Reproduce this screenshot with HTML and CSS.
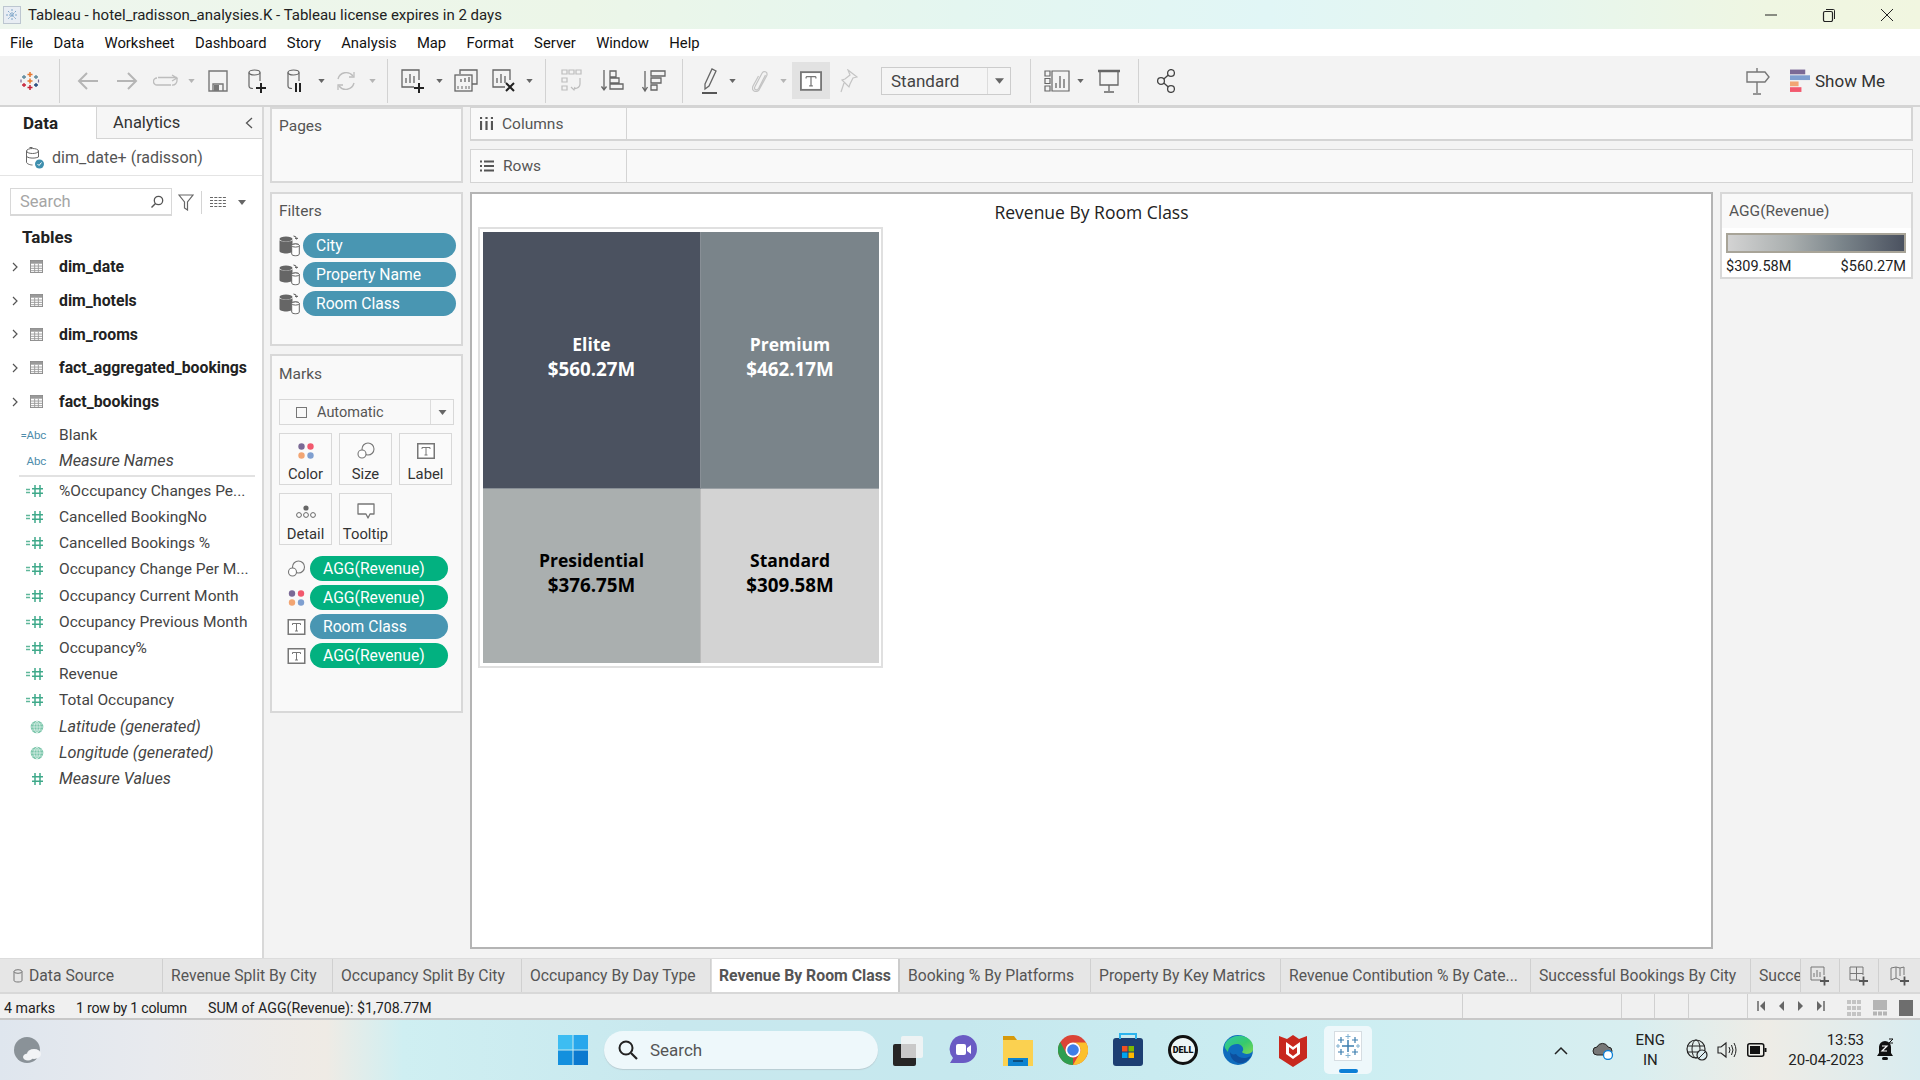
FILE: index.html
```html
<!DOCTYPE html>
<html lang="en">
<head>
<meta charset="utf-8">
<title>Tableau - hotel_radisson_analysies.K</title>
<link rel="stylesheet" href="styles.css">
</head>
<body>
<svg class="defs" xmlns="http://www.w3.org/2000/svg">
  <symbol id="caret" viewBox="0 0 8 5"><path d="M0 0h8L4 5z" fill="currentColor"/></symbol>
  <symbol id="tbl" viewBox="0 0 14 14"><rect x=".5" y=".5" width="13" height="13" fill="#fff" stroke="#8a8a8a"/><rect x="1" y="1" width="12" height="3" fill="#9a9a9a"/><path d="M1 6.500h12M1 9h12M1 11.500h12M5 4v9M9 4v9" stroke="#9a9a9a" fill="none"/></symbol>
  <symbol id="num" viewBox="0 0 20 14"><path d="M1 5.500h4M1 8.500h4" stroke="#5fb79a" fill="none" stroke-width="1.400"/><path d="M10 1v12M15 1v12M7 4.800h11M7 9.300h11" stroke="#3fa98a" fill="none" stroke-width="1.500"/></symbol>
  <symbol id="numplain" viewBox="0 0 20 14"><path d="M10 1v12M15 1v12M7 4.800h11M7 9.300h11" stroke="#3fa98a" fill="none" stroke-width="1.500"/></symbol>
  <symbol id="globe" viewBox="0 0 14 14"><circle cx="7" cy="7" r="6.300" fill="#7cc6ab"/><path d="M1 7h12M2 4h10M2 10h10M7 1v12M7 1c-4 3-4 9 0 12M7 1c4 3 4 9 0 12" stroke="#e4f4ee" stroke-width=".7" fill="none"/></symbol>
  <symbol id="ds" viewBox="0 0 21 22"><ellipse cx="7" cy="4" rx="6.500" ry="2.500" fill="#666"/><path d="M.5 5v11c0 3.300 13 3.300 13 0V5c0 2-13 2-13 0z" fill="#666"/><path d="M14.500 1q3 0 3 3l-1.500-1M17.500 4l1.500-1" stroke="#555" fill="none"/><ellipse cx="16.500" cy="10.500" rx="3.800" ry="1.600" fill="#fff" stroke="#666"/><path d="M12.700 10.500v8.500c0 2.300 7.600 2.300 7.600 0v-8.500" fill="#fff" stroke="#666"/><ellipse cx="16.500" cy="10.500" rx="3.800" ry="1.600" fill="#fff" stroke="#666"/></symbol>
  <symbol id="lab" viewBox="0 0 18 16"><rect x=".75" y=".75" width="16.500" height="14.500" fill="#fff" stroke="#777" stroke-width="1.500"/><path d="M5 4.500h8M9 4.500v7.500M7.500 12h3M5 4.500v1.500M13 4.500v1.500" stroke="#777" fill="none"/></symbol>
  <symbol id="size" viewBox="0 0 18 17"><circle cx="11" cy="7" r="6" fill="none" stroke="#777" stroke-width="1.100"/><circle cx="5" cy="12" r="4" fill="#fff" stroke="#777" stroke-width="1.100"/></symbol>
  <symbol id="color" viewBox="0 0 16 16"><circle cx="3.500" cy="3.500" r="3.200" fill="#7b6a96"/><circle cx="12.500" cy="3.500" r="3.200" fill="#f2596e"/><circle cx="3.500" cy="12.500" r="3.200" fill="#f2a573"/><circle cx="12.500" cy="12.500" r="3.200" fill="#7f9fd0"/></symbol>
  <symbol id="detail" viewBox="0 0 20 14"><circle cx="10" cy="3" r="2.600" fill="#666"/><circle cx="3" cy="10" r="2.400" fill="#fff" stroke="#666"/><circle cx="10" cy="10" r="2.400" fill="#fff" stroke="#666"/><circle cx="17" cy="10" r="2.400" fill="#fff" stroke="#666"/></symbol>
  <symbol id="tip" viewBox="0 0 18 16"><path d="M1 1h16v10h-4l-2 4-2-4H1z" fill="#fff" stroke="#777" stroke-width="1.300" stroke-linejoin="round"/></symbol>
  <symbol id="cyl" viewBox="0 0 14 22"><ellipse cx="6.500" cy="3.500" rx="5.500" ry="2.500" fill="none" stroke="#666" stroke-width="1.200"/><path d="M1 3.500V17c0 1.500 2 2.500 4 2.500M12 3.500V12" fill="none" stroke="#666" stroke-width="1.200"/></symbol>
  <symbol id="sheet" viewBox="0 0 24 24"><path d="M13 18H1V1h17v10" fill="none" stroke="#666" stroke-width="1.300"/><path d="M5 14V9M9 14V5M13 14V7" stroke="#666" stroke-width="1.300"/></symbol>
  <symbol id="chev" viewBox="0 0 6 10"><path d="M1 1l4 4-4 4" fill="none" stroke="#555" stroke-width="1.200"/></symbol>
</svg>

<header class="titlebar">
  <svg class="app-ico" viewBox="0 0 18 18" width="18" height="18"><rect x=".5" y=".5" width="17" height="17" fill="#e8edf3" stroke="#bcc6d0"/><path d="M9 3v12M3 9h12M5 5l8 8M13 5l-8 8" stroke="#7fa6c9" stroke-dasharray="2 1"/></svg>
  <span class="title-text">Tableau - hotel_radisson_analysies.K - Tableau license expires in 2 days</span>
  <div class="winctl">
    <svg width="14" height="14" viewBox="0 0 14 14"><path d="M1 7h12" stroke="#222" fill="none"/></svg>
    <svg width="14" height="14" viewBox="0 0 14 14"><rect x="1.500" y="3.500" width="9" height="10" rx="1.500" fill="none" stroke="#222" stroke-width="1.200"/><path d="M4 1.500h7.500q1 0 1 1V11" fill="none" stroke="#222"/></svg>
    <svg width="14" height="14" viewBox="0 0 14 14"><path d="M1 1l12 12M13 1L1 13" stroke="#222" fill="none"/></svg>
  </div>
</header>

<nav class="menubar">
  <span>File</span><span>Data</span><span>Worksheet</span><span>Dashboard</span><span>Story</span><span>Analysis</span><span>Map</span><span>Format</span><span>Server</span><span>Window</span><span>Help</span>
</nav>

<div class="toolbar">
  <svg width="20" height="20" viewBox="0 0 20 20"><path d="M10 1v5M7.500 3.500h5" stroke="#e8762d" stroke-width="1.500"/><path d="M4 4v4M2 6h4" stroke="#5b879b" stroke-width="1.300"/><path d="M16 4v4M14 6h4" stroke="#5b879b" stroke-width="1.300"/><path d="M10 7.500v5M7.500 10h5" stroke="#e8762d" stroke-width="1.500"/><path d="M4 12v4M2 14h4" stroke="#c72037" stroke-width="1.300"/><path d="M16 12v4M14 14h4" stroke="#1f447a" stroke-width="1.300"/><path d="M10 14v5M7.500 16.500h5" stroke="#c72037" stroke-width="1.500"/><path d="M1 8.500v3M18.500 8.500v3" stroke="#7b6a96" stroke-width="1.200"/></svg>
  <i class="sep"></i>
  <svg width="22" height="20" viewBox="0 0 22 20"><path d="M21 10H2M10 2l-8 8 8 8" fill="none" stroke="#b5b5b5" stroke-width="2"/></svg>
  <svg width="22" height="20" viewBox="0 0 22 20"><path d="M1 10h19M12 2l8 8-8 8" fill="none" stroke="#b5b5b5" stroke-width="2"/></svg>
  <svg width="26" height="14" viewBox="0 0 26 14"><path d="M5 3.500h19M19 1l5 3-5 3M18 11H4a3.500 3.500 0 0 1 0-7" fill="none" stroke="#bdbdbd" stroke-width="1.300"/><path d="M24 4v2a4.500 4.500 0 0 1-5 5" fill="none" stroke="#bdbdbd" stroke-width="1.300"/></svg>
  <svg class="car dim" width="7" height="4"><use href="#caret"/></svg>
  <svg width="20" height="22" viewBox="0 0 20 22"><path d="M1 1h18v20H1z" fill="none" stroke="#777" stroke-width="1.400"/><path d="M5 21v-7h10v7" fill="none" stroke="#777" stroke-width="1.400"/><rect x="6" y="15" width="5" height="6" fill="#777"/></svg>
  <svg width="20" height="24" viewBox="0 0 20 24"><use href="#cyl" width="14" height="22"/><path d="M8 19h10M13 14v10" stroke="#222" stroke-width="2"/></svg>
  <svg width="20" height="24" viewBox="0 0 20 24"><use href="#cyl" width="14" height="22"/><path d="M9 14v9M13 14v9" stroke="#222" stroke-width="2"/></svg>
  <svg class="car" width="7" height="4"><use href="#caret"/></svg>
  <svg width="22" height="22" viewBox="0 0 22 22"><path d="M3 9a8.500 8.500 0 0 1 15-3M19 13a8.500 8.500 0 0 1-15 3" fill="none" stroke="#bdbdbd" stroke-width="1.400"/><path d="M19 2v5h-5M3 20v-5h5" fill="none" stroke="#bdbdbd" stroke-width="1.300"/></svg>
  <svg class="car dim" width="7" height="4"><use href="#caret"/></svg>
  <i class="sep"></i>
  <svg width="24" height="24" viewBox="0 0 24 24"><use href="#sheet"/><path d="M13 19h10M18 14v10" stroke="#222" stroke-width="2"/></svg>
  <svg class="car" width="7" height="4"><use href="#caret"/></svg>
  <svg width="24" height="24" viewBox="0 0 24 24"><path d="M6 5V1h17v14h-5" fill="none" stroke="#666" stroke-width="1.300"/><rect x="1" y="6" width="17" height="16" fill="#f3f3f3" stroke="#666" stroke-width="1.300"/><path d="M11 13V9M15 13V8M7 13V10" stroke="#666" stroke-width="1.300"/><path d="M4 17v3M8 17v3M12 17v3M15 17v3" stroke="#666"/></svg>
  <svg width="24" height="24" viewBox="0 0 24 24"><use href="#sheet"/><path d="M14 14l8 8M22 14l-8 8" stroke="#222" stroke-width="2"/></svg>
  <svg class="car" width="7" height="4"><use href="#caret"/></svg>
  <i class="sep"></i>
  <svg width="22" height="24" viewBox="0 0 22 24"><path d="M1 1h5v4H1zM8 1h5v4H8zM15 1h5v4h-5zM1 9h5v4H1zM1 17h5v4H1z" fill="none" stroke="#bdbdbd" stroke-width="1.200"/><path d="M19 9v6q0 4-6 5M10 18l3 3 1-3" fill="none" stroke="#bdbdbd" stroke-width="1.200"/></svg>
  <svg width="24" height="24" viewBox="0 0 24 24"><path d="M3 1v19M0.500 17.500L3 21l2.500-3.500" fill="none" stroke="#666" stroke-width="1.300"/><path d="M9 2h6v6H9zM9 9h9v5H9zM9 15h13v5H9z" fill="none" stroke="#666" stroke-width="1.300"/></svg>
  <svg width="24" height="24" viewBox="0 0 24 24"><path d="M3 2v19M0.500 18L3 22l2.500-4" fill="none" stroke="#666" stroke-width="1.300"/><path d="M9 2h14v5H9zM9 9h10v5H9zM9 16h6v5H9z" fill="none" stroke="#666" stroke-width="1.300"/></svg>
  <i class="sep"></i>
  <svg width="16" height="26" viewBox="0 0 16 26"><path d="M3 16L10 1l4 2-7 15-4 3z" fill="none" stroke="#666" stroke-width="1.300"/><path d="M0 25h15" stroke="#444" stroke-width="1.800"/></svg>
  <svg class="car" width="7" height="4"><use href="#caret"/></svg>
  <svg width="16" height="22" viewBox="0 0 16 22"><path d="M13.500 5L6.800 18q-1.500 2.500-3.300 1.600T3 16.500L10 3.200q1.300-2.300 3.500-1.400t1.300 3.700L7 20q-2.500 2.500-5 1T1 16L6.500 6" fill="none" stroke="#c4c4c4" stroke-width="1.200"/></svg>
  <svg class="car dim" width="7" height="4"><use href="#caret"/></svg>
  <div class="tbtn-on"><svg width="22" height="22"><use href="#lab" width="22" height="22"/></svg></div>
  <svg width="18" height="24" viewBox="0 0 18 24"><path d="M8 1l9 7-4 1-3 6-1 3-7-7 3-1 5-4zM4 14l-3 9" fill="none" stroke="#c4c4c4" stroke-width="1.200"/></svg>
  <div class="std"><span>Standard</span><b><svg class="car" width="9" height="6"><use href="#caret"/></svg></b></div>
  <i class="sep"></i>
  <svg width="26" height="22" viewBox="0 0 26 22"><path d="M1 1h5v5H1zM1 8.500h5v5H1zM1 16h5v5H1zM8 1h17v20H8z" fill="none" stroke="#666" stroke-width="1.200"/><path d="M12 18v-5M16 18V6M20 18V9" stroke="#666" stroke-width="1.300"/></svg>
  <svg class="car" width="7" height="4"><use href="#caret"/></svg>
  <svg width="22" height="24" viewBox="0 0 22 24"><path d="M0 2h22" stroke="#666" stroke-width="2.500"/><path d="M2 3v13h18V3M11 16v6M6 23h10" fill="none" stroke="#666" stroke-width="1.300"/></svg>
  <i class="sep"></i>
  <svg width="18" height="24" viewBox="0 0 18 24"><circle cx="4" cy="12" r="3.400" fill="none" stroke="#444" stroke-width="1.300"/><circle cx="14" cy="4" r="3.400" fill="none" stroke="#444" stroke-width="1.300"/><circle cx="14" cy="20" r="3.400" fill="none" stroke="#444" stroke-width="1.300"/><path d="M6.800 10l4.500-4M6.800 14l4.500 4" stroke="#444" stroke-width="1.300"/></svg>
  <span class="tb-fill"></span>
  <svg width="24" height="28" viewBox="0 0 24 28"><path d="M1 5h18l4 5-4 5H1zM11 1v4M11 15v11M7 27h8" fill="none" stroke="#777" stroke-width="1.400"/></svg>
  <div class="showme">
    <svg width="20" height="24" viewBox="0 0 21 24"><rect y="0" width="16" height="5" fill="#7b6a96"/><rect y="6" width="21" height="5" fill="#7f9fd0"/><rect y="12.500" width="9" height="5" fill="#f2a573"/><rect y="18.500" width="12" height="5" fill="#f2596e"/></svg>
    <span>Show Me</span>
  </div>
</div>

<main class="main">
  <aside class="datapane">
    <div class="dp-tabs">
      <div class="dp-tab active">Data</div>
      <div class="dp-tab">Analytics<svg class="dp-chev" width="8" height="12" viewBox="0 0 8 12"><path d="M7 1L1.500 6 7 11" fill="none" stroke="#555" stroke-width="1.300"/></svg></div>
    </div>
    <div class="dp-source">
      <svg width="21" height="24" viewBox="0 0 20 24"><ellipse cx="8" cy="5" rx="6" ry="2.500" fill="none" stroke="#666"/><path d="M2 5v11c0 2 4 3 6 3M14 5v6M2 10c0 2 8 3 12 1" fill="none" stroke="#666"/><rect x="5" y="1" width="3" height="1" fill="#666"/><circle cx="15" cy="18" r="4.500" fill="#3f8fae"/><path d="M13 18l1.500 1.500 2.500-3" stroke="#fff" fill="none"/></svg>
      <span>dim_date+ (radisson)</span>
    </div>
    <div class="dp-search">
      <div class="searchbox"><span>Search</span><svg width="14" height="14" viewBox="0 0 14 14"><circle cx="8.500" cy="5.500" r="4.200" fill="none" stroke="#555" stroke-width="1.300"/><path d="M5.500 8.500L1.500 12.500" stroke="#555" stroke-width="1.500"/></svg></div>
      <svg class="dp-funnel" width="16" height="17" viewBox="0 0 16 17"><path d="M1 1h14l-5.500 7v8l-3-2V8z" fill="none" stroke="#666" stroke-width="1.200"/></svg>
      <i class="dp-div"></i>
      <svg class="dp-list" width="16" height="12" viewBox="0 0 16 12"><path d="M0 1.500h16M0 4.500h16M0 7.500h16M0 10.500h16" stroke="#666" stroke-dasharray="3 1.300"/></svg>
      <svg class="car dp-car" width="8" height="5"><use href="#caret"/></svg>
    </div>
    <h2 class="dp-h">Tables</h2>
    <ul class="tables">
      <li><svg class="chev" width="6" height="10"><use href="#chev"/></svg><svg class="ti" width="13" height="13"><use href="#tbl"/></svg><span>dim_date</span></li>
      <li><svg class="chev" width="6" height="10"><use href="#chev"/></svg><svg class="ti" width="13" height="13"><use href="#tbl"/></svg><span>dim_hotels</span></li>
      <li><svg class="chev" width="6" height="10"><use href="#chev"/></svg><svg class="ti" width="13" height="13"><use href="#tbl"/></svg><span>dim_rooms</span></li>
      <li><svg class="chev" width="6" height="10"><use href="#chev"/></svg><svg class="ti" width="13" height="13"><use href="#tbl"/></svg><span>fact_aggregated_bookings</span></li>
      <li><svg class="chev" width="6" height="10"><use href="#chev"/></svg><svg class="ti" width="13" height="13"><use href="#tbl"/></svg><span>fact_bookings</span></li>
    </ul>
    <ul class="fields dims">
      <li><span class="abc">=Abc</span><span>Blank</span></li>
      <li><span class="abc">Abc</span><em>Measure Names</em></li>
    </ul>
    <ul class="fields measures">
      <li><svg class="fi" width="20" height="14"><use href="#num"/></svg><span>%Occupancy Changes Pe...</span></li>
      <li><svg class="fi" width="20" height="14"><use href="#num"/></svg><span>Cancelled BookingNo</span></li>
      <li><svg class="fi" width="20" height="14"><use href="#num"/></svg><span>Cancelled Bookings %</span></li>
      <li><svg class="fi" width="20" height="14"><use href="#num"/></svg><span>Occupancy Change Per M...</span></li>
      <li><svg class="fi" width="20" height="14"><use href="#num"/></svg><span>Occupancy Current Month</span></li>
      <li><svg class="fi" width="20" height="14"><use href="#num"/></svg><span>Occupancy Previous Month</span></li>
      <li><svg class="fi" width="20" height="14"><use href="#num"/></svg><span>Occupancy%</span></li>
      <li><svg class="fi" width="20" height="14"><use href="#num"/></svg><span>Revenue</span></li>
      <li><svg class="fi" width="20" height="14"><use href="#num"/></svg><span>Total Occupancy</span></li>
      <li><svg class="gi" width="14" height="14"><use href="#globe"/></svg><em>Latitude (generated)</em></li>
      <li><svg class="gi" width="14" height="14"><use href="#globe"/></svg><em>Longitude (generated)</em></li>
      <li><svg class="fi" width="20" height="14"><use href="#numplain"/></svg><em>Measure Values</em></li>
    </ul>
  </aside>

  <section class="cards">
    <div class="card pages"><h3>Pages</h3></div>
    <div class="card filters">
      <h3>Filters</h3>
      <div class="pillrow"><svg width="21" height="22"><use href="#ds"/></svg><div class="pill blue">City</div></div>
      <div class="pillrow"><svg width="21" height="22"><use href="#ds"/></svg><div class="pill blue">Property Name</div></div>
      <div class="pillrow"><svg width="21" height="22"><use href="#ds"/></svg><div class="pill blue">Room Class</div></div>
    </div>
    <div class="card marks">
      <h3>Marks</h3>
      <div class="marktype"><i class="mt-box"></i><span>Automatic</span><b><svg class="car" width="9" height="5"><use href="#caret"/></svg></b></div>
      <div class="markbtns">
        <div class="mbtn"><svg width="16" height="16"><use href="#color"/></svg><span>Color</span></div>
        <div class="mbtn"><svg width="18" height="17"><use href="#size"/></svg><span>Size</span></div>
        <div class="mbtn"><svg width="18" height="16"><use href="#lab"/></svg><span>Label</span></div>
        <div class="mbtn"><svg width="20" height="14"><use href="#detail"/></svg><span>Detail</span></div>
        <div class="mbtn"><svg width="18" height="16"><use href="#tip"/></svg><span>Tooltip</span></div>
      </div>
      <div class="markpills">
        <div class="mprow"><svg width="18" height="17"><use href="#size"/></svg><div class="pill green">AGG(Revenue)</div></div>
        <div class="mprow"><svg width="16" height="16"><use href="#color"/></svg><div class="pill green">AGG(Revenue)</div></div>
        <div class="mprow"><svg width="18" height="16"><use href="#lab"/></svg><div class="pill blue">Room Class</div></div>
        <div class="mprow"><svg width="18" height="16"><use href="#lab"/></svg><div class="pill green">AGG(Revenue)</div></div>
      </div>
    </div>
  </section>

  <section class="work">
    <div class="shelf cols">
      <div class="shelf-l"><svg width="13" height="13" viewBox="0 0 13 13"><path d="M1 0v2M6.500 0v2M12 0v2" stroke="#555" stroke-width="2.200"/><path d="M1 4v9M6.500 4v9M12 4v9" stroke="#555" stroke-width="2.200"/></svg><span>Columns</span></div>
    </div>
    <div class="shelf">
      <div class="shelf-l"><svg width="14" height="12" viewBox="0 0 14 12"><path d="M0 1.500h2M4 1.500h10M0 6h2M4 6h10M0 10.500h2M4 10.500h10" stroke="#555" stroke-width="2"/></svg><span>Rows</span></div>
    </div>
    <div class="canvas">
      <div class="view">
        <h1 class="view-title">Revenue By Room Class</h1>
        <div class="treebox">
          <div class="tree">
            <div class="cell elite"><b>Elite</b><b>$560.27M</b></div>
            <div class="cell premium"><b>Premium</b><b>$462.17M</b></div>
            <div class="cell presidential"><b>Presidential</b><b>$376.75M</b></div>
            <div class="cell standard"><b>Standard</b><b>$309.58M</b></div>
          </div>
        </div>
      </div>
      <div class="legend">
        <h3>AGG(Revenue)</h3>
        <div class="legend-body">
          <div class="ramp"></div>
          <div class="ramp-l"><span>$309.58M</span><span>$560.27M</span></div>
        </div>
      </div>
    </div>
  </section>
</main>

<div class="tabs">
  <div class="tab t163"><svg width="10" height="14" viewBox="0 0 10 14"><ellipse cx="5" cy="2.500" rx="4" ry="1.800" fill="none" stroke="#777"/><path d="M1 2.500v9c0 2 8 2 8 0v-9" fill="none" stroke="#777"/></svg>Data Source</div>
  <div class="tab t170">Revenue Split By City</div>
  <div class="tab t189">Occupancy Split By City</div>
  <div class="tab t189">Occupancy By Day Type</div>
  <div class="tab t189 active">Revenue By Room Class</div>
  <div class="tab t191">Booking % By Platforms</div>
  <div class="tab t190">Property By Key Matrics</div>
  <div class="tab t250">Revenue Contibution % By Cate...</div>
  <div class="tab t220">Successful Bookings By City</div>
  <div class="tab t49">Succe</div>
  <div class="tabico"><svg width="20" height="20" viewBox="0 0 20 20"><path d="M11 14H1V1h13v8" fill="none" stroke="#777"/><path d="M4 11V7M7 11V4M10 11V6" stroke="#777"/><path d="M10 15h9M14.500 10.500v9" stroke="#555" stroke-width="1.800"/></svg></div>
  <div class="tabico"><svg width="20" height="20" viewBox="0 0 20 20"><path d="M11 14H1V1h13v8M1 7.500h13M7.500 1v13" fill="none" stroke="#777"/><path d="M10 15h9M14.500 10.500v9" stroke="#555" stroke-width="1.800"/></svg></div>
  <div class="tabico last"><svg width="20" height="20" viewBox="0 0 20 20"><path d="M10 14l-4-2-5 2V2l5-1 4 1 4-1v8M6 1v11M10 2v8" fill="none" stroke="#777"/><path d="M10 15h9M14.500 10.500v9" stroke="#555" stroke-width="1.800"/></svg></div>
</div>

<div class="status">
  <span class="s1">4 marks</span><span class="s2">1 row by 1 column</span><span class="s3">SUM of AGG(Revenue): $1,708.77M</span>
  <div class="st-cells"><i class="c159"></i><i class="c33"></i><i class="c34"></i><i class="c59"></i></div>
  <div class="st-nav">
    <svg width="8" height="10" viewBox="0 0 8 10"><path d="M1 0v10" stroke="#666" stroke-width="1.500"/><path d="M8 0v10L3 5z" fill="#666"/></svg>
    <svg width="5" height="10" viewBox="0 0 5 10"><path d="M5 0v10L0 5z" fill="#666"/></svg>
    <svg width="5" height="10" viewBox="0 0 5 10"><path d="M0 0v10l5-5z" fill="#666"/></svg>
    <svg width="8" height="10" viewBox="0 0 8 10"><path d="M7 0v10" stroke="#666" stroke-width="1.500"/><path d="M0 0v10l5-5z" fill="#666"/></svg>
  </div>
  <div class="st-view">
    <svg width="14" height="16" viewBox="0 0 14 16"><path d="M0 2h14M0 8h14M0 14h14" stroke="#c4c4c4" stroke-width="4" stroke-dasharray="4 1"/></svg>
    <svg width="14" height="16" viewBox="0 0 14 16"><rect width="14" height="10" fill="#b5b5b5"/><path d="M0 13.500h14" stroke="#b5b5b5" stroke-width="4" stroke-dasharray="4 1"/></svg>
    <svg width="14" height="16" viewBox="0 0 14 16"><rect width="14" height="16" fill="#6e6e6e"/></svg>
  </div>
</div>

<footer class="taskbar">
  <svg class="weather" width="28" height="32" viewBox="0 0 28 32"><circle cx="13" cy="16" r="13" fill="#8a9298"/><ellipse cx="20" cy="20" rx="7" ry="5" fill="#f2f4f6"/><ellipse cx="14" cy="23" rx="5" ry="3.500" fill="#f2f4f6"/></svg>
  <div class="tb-center">
    <svg class="winlogo" width="30" height="30" viewBox="0 0 30 30"><rect width="14.500" height="14.500" fill="#3dbdf2"/><rect x="15.500" width="14.500" height="14.500" fill="#28a7ec"/><rect y="15.500" width="14.500" height="14.500" fill="#1490de"/><rect x="15.500" y="15.500" width="14.500" height="14.500" fill="#0b79cf"/></svg>
    <div class="tb-search"><svg width="20" height="20" viewBox="0 0 20 20"><circle cx="8" cy="8" r="6.500" fill="none" stroke="#222" stroke-width="2"/><path d="M13 13l6 6" stroke="#222" stroke-width="2.200"/></svg><span>Search</span></div>
    <svg class="tk" width="30" height="32" viewBox="0 0 30 32"><rect x="8" y="2" width="22" height="22" rx="2" fill="#f4f4f4" opacity=".85"/><rect x="0" y="10" width="23" height="22" rx="2" fill="#262626"/><rect x="8" y="10" width="15" height="14" fill="#c9c9c9"/></svg>
    <svg class="tk" width="30" height="32" viewBox="0 0 30 32"><path d="M15 1a14 14 0 1 1 0 28H2l3-5A14 14 0 0 1 15 1z" fill="#6a5bc4"/><rect x="8" y="10" width="10" height="11" rx="2" fill="#fff"/><path d="M19 14l4-3v9l-4-3z" fill="#fff"/></svg>
    <svg class="tk" width="30" height="32" viewBox="0 0 30 32"><path d="M0 2h11l3 4h16v26H0z" fill="#d79a0b"/><rect y="6" width="30" height="26" fill="#fbd150"/><rect x="5" y="24" width="20" height="8" fill="#0d83d0"/><rect x="10" y="26" width="10" height="2" fill="#0a4f80"/></svg>
    <svg class="tk" width="30" height="30" viewBox="0 0 30 30"><circle cx="15" cy="15" r="15" fill="#db4437"/><path d="M28 7.500A15 15 0 0 1 15 30l6.500-11.250A7.500 7.500 0 0 0 15 7.500z" fill="#fbc02d"/><path d="M15 30A15 15 0 0 1 2.300 7l6.200 11.750A7.500 7.500 0 0 0 15 22.500z" fill="#2e9e4f"/><circle cx="15" cy="15" r="7.500" fill="#fff"/><circle cx="15" cy="15" r="5.800" fill="#3f7ee8"/></svg>
    <svg class="tk" width="30" height="34" viewBox="0 0 30 34"><rect y="5" width="30" height="28" rx="3" fill="#1d3f73"/><path d="M7 6V1h16v5" fill="none" stroke="#2db4ee" stroke-width="2"/><rect x="9" y="13" width="5.500" height="5.500" fill="#f25022"/><rect x="15.500" y="13" width="5.500" height="5.500" fill="#7fba00"/><rect x="9" y="19.500" width="5.500" height="5.500" fill="#00a4ef"/><rect x="15.500" y="19.500" width="5.500" height="5.500" fill="#ffb900"/></svg>
    <div class="dell"><span>DELL</span></div>
    <svg class="tk" width="30" height="30" viewBox="0 0 30 30"><defs><linearGradient id="edge" x1="0" y1="0" x2="1" y2="1"><stop offset="0" stop-color="#2dc8a8"/><stop offset=".55" stop-color="#37c96c"/><stop offset="1" stop-color="#7ed957"/></linearGradient></defs><circle cx="15" cy="15" r="15" fill="#0f6cbd"/><path d="M2 9C6 1 18-2 26 4c5 4 5 11 3 13-3 3-9 2-10 0 3-3 0-8-5-8-6 0-9 4-9 8C2 14 1 12 2 9z" fill="url(#edge)"/><path d="M13 19c3 5 10 5 15 2-3 6-10 9-15 6-4-2-6-6-6-10 1 2 3 3 6 2z" fill="#0d4f9e"/></svg>
    <svg class="tk" width="28" height="36" viewBox="0 0 28 36"><path d="M0 4l8 3 6-4 6 4 8-3v22l-14 9L0 26z" fill="#c8281e"/><path d="M7 10l7 5 7-5v12l-7 5-7-5z" fill="#fff"/><path d="M10 15l4 3 4-3v6l-4 3-4-3z" fill="#c8281e"/></svg>
    <div class="tk-tile"><svg width="28" height="30" viewBox="0 0 28 30"><rect x=".5" y=".5" width="27" height="29" fill="#fff" stroke="#d6dde2"/><path d="M14 9v12M8 15h12" stroke="#3d7fb0" stroke-width="1.500"/><path d="M14 3v5M11.500 5.500h5M14 22v5M11.500 24.500h5M4 13v4M2 15h4M24 13v4M22 15h4" stroke="#7fb0d0" stroke-width="1"/><path d="M7 6v6M4 9h6M21 6v6M18 9h6M7 18v6M4 21h6M21 18v6M18 21h6" stroke="#3d7fb0" stroke-width="1.200"/></svg><i></i></div>
  </div>
  <div class="tray">
    <svg class="tr-chev" width="14" height="9" viewBox="0 0 14 9"><path d="M1 8l6-6 6 6" fill="none" stroke="#222" stroke-width="1.500"/></svg>
    <svg class="tr-cloud" width="22" height="20" viewBox="0 0 22 20"><path d="M5 15a4 4 0 0 1 0-8 6 6 0 0 1 11 0 4 4 0 0 1 0 8z" fill="#777" stroke="#222"/><circle cx="16" cy="15" r="4.500" fill="#fff" stroke="#0c80d8" stroke-width="1.300"/></svg>
    <div class="lang"><span>ENG</span><span>IN</span></div>
    <svg class="tr-globe" width="22" height="22" viewBox="0 0 22 22"><circle cx="10" cy="10" r="9" fill="none" stroke="#222" stroke-width="1.200"/><ellipse cx="10" cy="10" rx="4" ry="9" fill="none" stroke="#222"/><path d="M1 7h18M1 13h18" stroke="#222"/><circle cx="16" cy="16" r="5" fill="#dcecef" stroke="#222" stroke-width="1.200"/><path d="M13 19l6-6" stroke="#222"/></svg>
    <svg class="tr-vol" width="20" height="18" viewBox="0 0 20 18"><path d="M1 6h3l5-4v14l-5-4H1z" fill="none" stroke="#222" stroke-width="1.100"/><path d="M12 6q2 3 0 6M14.500 4q3 5 0 10M17 2q4 7 0 14" fill="none" stroke="#222"/></svg>
    <svg class="tr-bat" width="20" height="14" viewBox="0 0 20 14"><rect x=".75" y=".75" width="16" height="12.500" rx="2" fill="none" stroke="#111" stroke-width="1.500"/><rect x="3" y="3" width="10" height="8" fill="#111"/><rect x="17.500" y="5" width="2" height="4" fill="#111"/></svg>
    <div class="clock"><span>13:53</span><span>20-04-2023</span></div>
    <svg class="tr-bell" width="18" height="24" viewBox="0 0 18 24"><path d="M9 3a6 6 0 0 1 6 6v6l2 3H1l2-3V9a6 6 0 0 1 6-6z" fill="#111"/><rect x="6" y="19" width="6" height="3" rx="1.500" fill="#111"/><path d="M6 8h5l-5 5h5" stroke="#fff" stroke-width="1.200" fill="none"/><path d="M13 1h4l-4 4h4" stroke="#111" fill="none"/></svg>
  </div>
</footer>
</body>
</html>
```

FILE: styles.css
```css
* { box-sizing: border-box; }
html, body { margin: 0; padding: 0; }
body {
  width: 1920px; height: 1080px; overflow: hidden;
  display: flex; flex-direction: column;
  font-family: Roboto, "Liberation Sans", sans-serif;
  font-size: 15px; color: #333; background: #f3f3f3;
}
h1, h2, h3, ul { margin: 0; padding: 0; font-weight: normal; list-style: none; }
em { font-style: italic; }
.defs { display: none; }

.titlebar {
  height: 29px; flex: none; display: flex; align-items: center; padding-left: 3px;
  background: linear-gradient(90deg, #eef6ee 0%, #ecf6e8 30%, #e4f6f0 50%, #e1f6f6 66%, #e6f6ee 80%, #eff6e2 92%, #f1f6e0 100%);
  color: #222; font-size: 15px;
}
.app-ico { margin-right: 7px; }
.winctl { margin-left: auto; display: flex; gap: 44px; padding-right: 25px; margin-right: 1px; }

.menubar {
  height: 27px; flex: none; background: #fff; display: flex; align-items: center;
  padding-left: 10px; gap: 20.300px; color: #111; font-size: 14.800px;
}

.toolbar {
  height: 51px; flex: none; background: #f3f3f3; padding-left: 10px;
  display: grid; align-items: center; justify-items: center;
  grid-template-columns: 40px 19px 38px 40px 38px 12px 42px 38px 40px 8px 42px 10px 20px 32px 20px 34px 42px 8px 24px 30px 52px 30px 26px 30px 14px 41px 6px 44px 38px 148px 28px 26px 20px 38px 20px 36px 1fr auto auto;
  grid-auto-flow: column;
  border-bottom: 2px solid #d4d4d4;
}
.sep { width: 1px; height: 44px; background: #d2d2d2; }
.car { color: #666; }
.car.dim { color: #b5b5b5; }
.tb-fill { width: 1px; }
.tbtn-on { width: 38px; height: 37px; background: #e2e2e2; display: flex; align-items: center; justify-content: center; justify-self: end; }
.std {
  width: 130px; height: 28px; margin-left: 13px; border: 1px solid #ccc; background: #f5f5f5; display: flex; align-items: center;
  font-size: 17px; color: #444; padding-left: 9px; justify-self: start;
}
.std span { flex: 1; }
.std b { width: 23px; height: 100%; border-left: 1px solid #dcdcdc; display: flex; align-items: center; justify-content: center; }
.showme { display: flex; align-items: center; gap: 5px; font-size: 17px; color: #333; margin: 0 35px 0 20px; }

.main { height: 851px; flex: none; display: flex; }
.datapane {
  width: 264px; flex: none; background: #fff; border-right: 2px solid #d8d8d8;
  display: flex; flex-direction: column;
}
.dp-tabs { height: 32px; display: flex; flex: none; }
.dp-tab { display: flex; align-items: center; font-size: 16.500px; color: #333; position: relative; }
.dp-tab.active { width: 97px; padding-left: 23px; font-size: 17px; font-weight: 700; color: #222; border-right: 1px solid #d4d4d4; }
.dp-tab:not(.active) { flex: 1; padding-left: 16px; background: #f6f6f6; border-bottom: 1px solid #d4d4d4; }
.dp-chev { margin-left: auto; margin-right: 9px; }
.dp-source { height: 37px; flex: none; display: flex; align-items: center; padding: 1px 0 0 24px; gap: 7px; font-size: 16px; color: #555; border-bottom: 1px solid #e4e4e4; }
.dp-search { display: flex; align-items: center; margin-top: 12px; padding-left: 10px; height: 28px; flex: none; }
.searchbox { width: 162px; height: 28px; border: 1px solid #d8d8d8; border-bottom-width: 2px; display: flex; align-items: center; justify-content: space-between; padding: 0 7px 0 9px; color: #a5a5a5; font-size: 16.500px; }
.dp-funnel { margin-left: 6px; }
.dp-div { width: 1px; height: 23px; background: #d4d4d4; margin-left: 7px; }
.dp-list { margin-left: 8px; }
.dp-car { margin-left: 12px; }
.dp-h { font-size: 17px; font-weight: 700; color: #222; padding-left: 22px; height: 34px; display: flex; align-items: flex-end; line-height: 25px; }
.tables li { height: 33.700px; display: flex; align-items: center; font-weight: 700; font-size: 15.800px; color: #222; }
.tables { flex: none; }
.chev { margin-left: 12px; }
.ti { margin-left: 12px; margin-right: 16px; }
.fields { flex: none; }
.fields li { height: 26.200px; display: flex; align-items: center; color: #444; font-size: 15.500px; }
.fields em { font-size: 16.200px; color: #444; }
.fields.dims { margin-top: 3px; border-bottom: 2px solid #e2e2e2; margin-left: 19px; margin-right: 7px; padding-bottom: 1px; }
.fields.dims li { margin-left: -19px; margin-right: -7px; }
.measures { padding-top: 1px; }
.abc { width: 46px; text-align: right; margin-right: 13px; font-size: 11.500px; letter-spacing: -.2px; color: #4d8cab; }
.fi { margin-left: 25px; margin-right: 14px; }
.gi { margin-left: 30px; margin-right: 15px; }

.cards { width: 199px; flex: none; padding-left: 6px; display: flex; flex-direction: column; }
.card { background: #f9f9f9; border: 2px solid #d8d8d8; padding-left: 7px; color: #555; }
.card h3 { font-size: 15.500px; color: #555; }
.pages { height: 76px; }
.pages h3 { padding-top: 8px; }
.filters { height: 154px; margin-top: 9px; display: flex; flex-direction: column; }
.filters h3 { padding-top: 8px; height: 39px; }
.pillrow { display: flex; align-items: center; height: 25px; margin-bottom: 4px; gap: 3px; }
.pillrow svg { flex: none; }
.pill { height: 25px; border-radius: 13px; color: #fff; font-size: 15.700px; display: flex; align-items: center; }
.pillrow .pill { width: 153px; padding-left: 13px; }
.blue { background: #4996b2; }
.green { background: #02b180; }
.marks { height: 359px; margin-top: 8px; }
.marks h3 { padding-top: 9px; height: 43px; }
.marktype { width: 175px; height: 26px; border: 1px solid #d8d8d8; display: flex; align-items: center; font-size: 14.500px; color: #555; padding-left: 16px; background: #f9f9f9; }
.mt-box { width: 11px; height: 11px; border: 1px solid #777; margin-right: 10px; }
.marktype span { flex: 1; }
.marktype b { width: 23px; height: 100%; border-left: 1px solid #dcdcdc; display: flex; align-items: center; justify-content: center; }
.markbtns { display: grid; grid-template-columns: 53px 53px 53px; column-gap: 7px; row-gap: 8px; margin-top: 8px; }
.mbtn { height: 52px; border: 1px solid #d8d8d8; display: flex; flex-direction: column; align-items: center; justify-content: flex-end; gap: 6px; padding-bottom: 1px; font-size: 14.800px; color: #333; background: #fafafa; }
.markpills { margin-top: 11px; display: flex; flex-direction: column; gap: 4px; }
.mprow { display: flex; align-items: center; height: 25px; padding-left: 8px; }
.mprow svg { flex: none; width: 19px; }
.mprow .pill { width: 138px; margin-left: 4px; padding-left: 13px; }

.work { flex: 1; min-width: 0; padding: 0 7px; display: flex; flex-direction: column; }
.shelf { height: 34px; flex: none; background: #f9f9f9; border: 1px solid #d4d4d4; margin-top: 8px; display: flex; }
.shelf.cols { margin-top: 0; border-bottom-width: 2px; border-right-width: 2px; }
.shelf-l { width: 156px; border-right: 1px solid #d4d4d4; display: flex; align-items: center; padding-left: 9px; gap: 9px; color: #555; font-size: 15.500px; }
.canvas { flex: 1; min-height: 0; display: flex; gap: 7px; margin-top: 9px; padding-bottom: 9px; }
.view { width: 1243px; background: #fff; border: 2px solid #b4b4b4; padding-left: 6px; display: flex; flex-direction: column; }
.view-title { height: 33px; text-align: center; font-family: "Open Sans", sans-serif; font-size: 17.500px; color: #222; line-height: 37px; padding-right: 6px; }
.treebox { width: 405px; height: 441px; border: 2px solid #e0e0e0; padding: 3px; }
.tree { display: grid; grid-template-columns: 218px 178px; grid-template-rows: 257px 174px; width: 396px; height: 431px; }
.cell { display: flex; flex-direction: column; align-items: center; justify-content: center; padding-bottom: 7px; font-family: "Open Sans", sans-serif; font-size: 17.500px; line-height: 25px; }
.cell b { font-weight: 700; }
.cell b + b { font-size: 18.800px; }
.elite { background: #4b5260; color: #fff; border-right: 1px solid #888f96; border-bottom: 1px solid #888f96; }
.premium { background: #7a848a; color: #fff; border-bottom: 1px solid #9aa0a5; }
.presidential { background: #aaafaf; color: #000; border-right: 1px solid #bbb; }
.standard { background: #d3d3d3; color: #000; }

.legend { width: 193px; height: 87px; background: #fff; border: 2px solid #d8d8d8; display: flex; flex-direction: column; }
.legend h3 { height: 34px; background: #f9f9f9; font-size: 15.500px; color: #555; padding: 8px 0 0 7px; }
.legend-body { padding: 5px 5px 0 4px; }
.ramp { height: 20px; border: 2px solid #a8a498; background: linear-gradient(90deg, #d3d3d3, #aaafaf 35%, #7a848a 65%, #4b5260); }
.ramp-l { display: flex; justify-content: space-between; font-size: 14.500px; color: #222; margin-top: 5px; }

.tabs { height: 36px; flex: none; display: flex; background: #e6e6e6; border-top: 1px solid #dcdcdc; border-bottom: 2px solid #d8d8d8; }
.tab { height: 33px; flex: none; border-right: 1px solid #d0d0d0; padding-left: 8px; display: flex; align-items: center; gap: 6px; color: #555; font-size: 15.700px; white-space: nowrap; overflow: hidden; }
.t163 { width: 163px; padding-left: 13px; }
.t170 { width: 170px; }
.t189 { width: 189px; }
.t191 { width: 191px; }
.t190 { width: 190px; }
.t250 { width: 250px; }
.t220 { width: 220px; }
.t49 { width: 49px; border-right: none; }
.tab.active { background: #fff; font-weight: 700; border-left: 1px solid #ddd; border-right: 2px solid #ccc; padding-left: 7px; font-size: 15.800px; }
.tabico { width: 39px; height: 33px; flex: none; border-left: 1px solid #d0d0d0; display: flex; align-items: center; justify-content: center; }
.tabico.last { width: 42px; }

.status { height: 26px; flex: none; display: flex; align-items: center; background: #f0f0f0; border-bottom: 2px solid #c8c8c8; font-size: 14.200px; color: #222; padding: 3px 0 0 4px; }
.s1 { width: 72px; }
.s2 { width: 132px; letter-spacing: -.25px; }
.s3 { width: 1254px; }
.st-cells { display: flex; height: 24px; margin-top: -3px; }
.st-cells i { display: block; height: 24px; border-left: 1px solid #d0d0d0; }
.c159 { width: 159px; }
.c33 { width: 33px; }
.c34 { width: 34px; }
.c59 { width: 59px; }
.st-nav { width: 90px; height: 24px; margin-top: -3px; border-left: 1px solid #d0d0d0; display: flex; align-items: center; gap: 14px; padding-left: 9px; }
.st-view { display: flex; align-items: center; gap: 12px; padding-left: 10px; }

.taskbar {
  height: 60px; flex: none; display: flex; align-items: center;
  background: linear-gradient(90deg, #dfe6ee 0%, #e8eaee 8%, #efebe5 17%, #cfeff2 21%, #c8e8ee 35%, #c6e8ee 50%, #cceef2 70%, #d8eef0 85%, #eeece6 92%, #d9ecf0 100%);
  color: #222;
}
.weather { margin-left: 14px; }
.tb-center { display: flex; align-items: center; margin-left: 516px; height: 100%; }
.tb-search { width: 274px; height: 38px; margin-left: 16px; border-radius: 19px; background: #eef8fb; display: flex; align-items: center; padding-left: 14px; gap: 12px; font-size: 17px; color: #555; box-shadow: 0 1px 1px #b8ccd2; }
.tk { width: 30px; margin-left: 25px; flex: none; }
.tb-search + .tk { margin-left: 15px; }
.dell { width: 30px; height: 30px; margin-left: 25px; border: 3px solid #111; border-radius: 50%; display: flex; align-items: center; justify-content: center; font-size: 9px; font-weight: 900; color: #111; background: #eef6f6; }
.tk-tile { width: 48px; height: 48px; margin-left: 16px; border-radius: 5px; background: #eef8fb; display: flex; align-items: flex-start; padding-top: 5px; justify-content: center; position: relative; }
.tk-tile i { position: absolute; left: 15px; bottom: 1px; width: 19px; height: 4px; border-radius: 2px; background: #0c7fd6; }
.tray { margin-left: auto; display: flex; align-items: center; padding-right: 26px; }
.tr-chev { margin-right: 24px; }
.tr-cloud { margin-right: 21px; }
.lang { display: flex; flex-direction: column; align-items: center; font-size: 15px; line-height: 20px; margin-right: 21px; width: 30px; }
.tr-globe { margin-right: 9px; }
.tr-vol { margin-right: 10px; }
.tr-bat { margin-right: 21px; }
.clock { display: flex; flex-direction: column; align-items: flex-end; font-size: 15px; line-height: 20px; margin-right: 12px; }
```
